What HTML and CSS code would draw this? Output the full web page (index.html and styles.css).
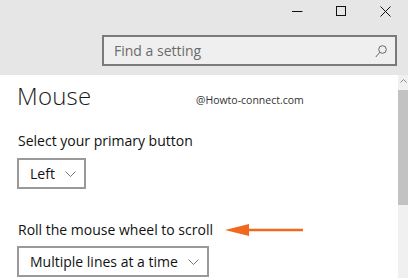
FILE: index.html
```html
<!DOCTYPE html>
<html lang="en">
<head>
    <meta charset="UTF-8">
    <meta name="viewport" content="width=device-width, initial-scale=1.0">
    <title>Settings - Mouse</title>
    <link rel="stylesheet" href="styles.css">
</head>
<body>
    <div class="header">
        <div class="titlebar">
            <span class="control">
                <svg width="11" height="11" viewBox="0 0 11 11"><path d="M0 5.5H10.5" stroke="#111" stroke-width="1"/></svg>
            </span>
            <span class="control">
                <svg width="11" height="11" viewBox="0 0 11 11"><rect x="0.5" y="0.5" width="9" height="9" fill="none" stroke="#111" stroke-width="1"/></svg>
            </span>
            <span class="control">
                <svg width="11" height="11" viewBox="0 0 11 11"><path d="M0.5 0.5L10.5 10.5M10.5 0.5L0.5 10.5" stroke="#111" stroke-width="1"/></svg>
            </span>
        </div>
        <div class="search-row">
            <div class="search">
                <span class="placeholder">Find a setting</span>
                <svg class="search-icon" width="12" height="13" viewBox="0 0 12 13">
                    <circle cx="7.5" cy="4.5" r="3.8" fill="none" stroke="#666" stroke-width="1"/>
                    <path d="M4.8 7.3L0.8 12" stroke="#666" stroke-width="1"/>
                </svg>
            </div>
        </div>
    </div>

    <div class="main">
        <div class="content">
            <div class="title-row">
                <h1 class="title">Mouse</h1>
                <span class="watermark">@Howto-connect.com</span>
            </div>

            <div class="label">Select your primary button</div>
            <div class="dropdown">
                <span>Left</span>
                <svg class="chevron" width="11" height="6" viewBox="0 0 11 6"><path d="M0.5 0.5L5.5 5.5L10.5 0.5" fill="none" stroke="#777" stroke-width="1"/></svg>
            </div>

            <div class="label label-wide">
                <span>Roll the mouse wheel to scroll</span>
                <svg class="arrow" width="80" height="14" viewBox="0 0 80 14">
                    <path d="M0 7L24 1V13Z" fill="#f0691e"/>
                    <path d="M20 7H78" stroke="#f0691e" stroke-width="2.5"/>
                </svg>
            </div>
            <div class="dropdown">
                <span>Multiple lines at a time</span>
                <svg class="chevron" width="11" height="6" viewBox="0 0 11 6"><path d="M0.5 0.5L5.5 5.5L10.5 0.5" fill="none" stroke="#777" stroke-width="1"/></svg>
            </div>
        </div>

        <div class="scrollbar">
            <div class="scroll-up">
                <svg width="7" height="4" viewBox="0 0 7 4"><path d="M0.5 3.5L3.5 0.5L6.5 3.5" fill="none" stroke="#888" stroke-width="1"/></svg>
            </div>
            <div class="thumb"></div>
        </div>
    </div>
</body>
</html>
```

FILE: styles.css
```css
* {
    margin: 0;
    padding: 0;
    box-sizing: border-box;
}

body {
    font-family: "Open Sans", "Noto Sans", sans-serif;
    background-color: #fff;
    color: #000;
    width: 408px;
    height: 278px;
    overflow: hidden;
}

.header {
    background-color: #e6e6e6;
    height: 75px;
}

.titlebar {
    display: flex;
    justify-content: flex-end;
    height: 35px;
    padding-top: 6px;
    padding-right: 17px;
    gap: 33px;
}

.control {
    display: flex;
    width: 11px;
    height: 11px;
}

.search-row {
    display: flex;
    justify-content: flex-end;
    padding-right: 11px;
}

.search {
    width: 295px;
    height: 31px;
    border: 2px solid #7a7a7a;
    background-color: #efefef;
    display: flex;
    align-items: center;
    justify-content: space-between;
    padding: 0 8px 0 10px;
}

.placeholder {
    font-size: 14px;
    color: #6b6b6b;
    padding-bottom: 1px;
}

.search-icon {
    margin-top: 1px;
}

.main {
    display: flex;
    height: 203px;
}

.content {
    flex: 1;
    padding-left: 17px;
}

.title-row {
    display: flex;
    align-items: baseline;
    height: 44px;
    padding-top: 4px;
}

.title {
    font-size: 24px;
    font-weight: 300;
    color: #1a1a1a;
    width: 179px;
    letter-spacing: 0.2px;
}

.watermark {
    font-size: 10.5px;
    color: #333;
    position: relative;
    top: -1px;
}

.label {
    font-size: 14px;
    color: #111;
    height: 21px;
    margin-top: 12px;
    margin-left: 1px;
}

.label-wide {
    display: flex;
    align-items: center;
    gap: 12px;
    margin-top: 30px;
}

.arrow {
    margin-top: 1px;
}

.dropdown {
    display: inline-flex;
    align-items: center;
    gap: 10px;
    height: 31px;
    border: 2px solid #999;
    padding: 0 8px 0 11px;
    font-size: 14px;
    color: #111;
    margin-top: 6px;
}

.chevron {
    margin-top: 1px;
}

.scrollbar {
    width: 10px;
    background-color: #f0f0f0;
    display: flex;
    flex-direction: column;
}

.scroll-up {
    height: 15px;
    display: flex;
    justify-content: center;
    padding-top: 4px;
}

.thumb {
    height: 115px;
    background-color: #c2c2c2;
}
```
